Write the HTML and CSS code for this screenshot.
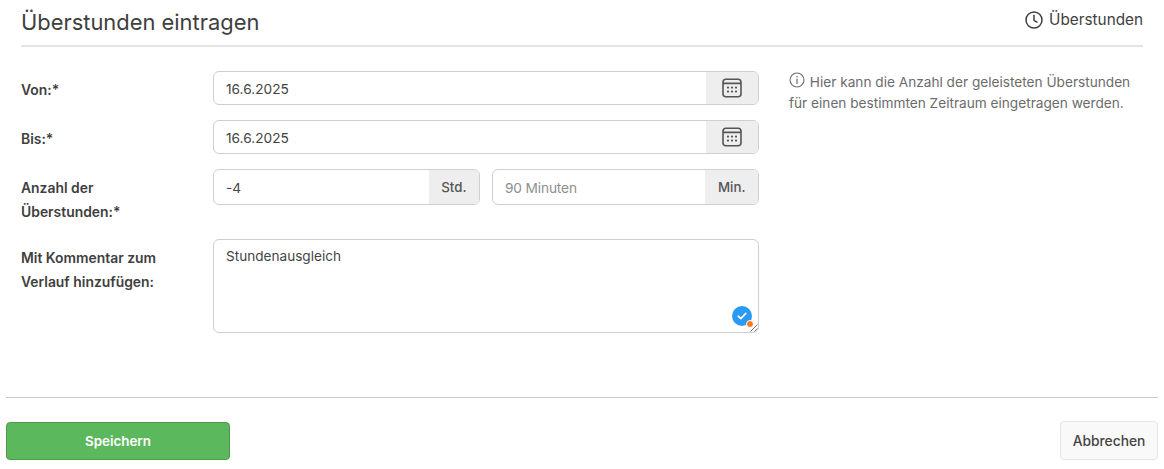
FILE: index.html
```html
<!DOCTYPE html>
<html lang="de">
<head>
<meta charset="utf-8">
<title>Überstunden eintragen</title>
<link rel="stylesheet" href="styles.css">
</head>
<body>
<main class="content">
  <header class="head">
    <h1 class="title">Überstunden eintragen</h1>
    <a class="head-link">
      <svg class="clock" viewBox="0 0 18 18" width="18" height="18" aria-hidden="true"><circle cx="9" cy="9" r="8" fill="none" stroke="currentColor" stroke-width="1.5"/><path d="M9 4.3V9.4L12 11.2" fill="none" stroke="currentColor" stroke-width="1.5" stroke-linecap="round" stroke-linejoin="round"/></svg>
      <span>Überstunden</span>
    </a>
  </header>
  <div class="columns">
    <form class="form">
      <div class="row row-date">
        <label class="label">Von:*</label>
        <div class="group">
          <div class="field">16.6.2025</div>
          <div class="addon addon-cal">
            <svg class="cal" viewBox="0 0 20 20" width="20" height="20" aria-hidden="true"><rect x="1" y="1.2" width="18" height="17.6" rx="3" fill="none" stroke="currentColor" stroke-width="1.6"/><path d="M1 5.4H19" stroke="currentColor" stroke-width="1.6"/><g fill="currentColor"><circle cx="6" cy="9.6" r="1.1"/><circle cx="10" cy="9.6" r="1.1"/><circle cx="14" cy="9.6" r="1.1"/><circle cx="6" cy="13.6" r="1.1"/><circle cx="10" cy="13.6" r="1.1"/><circle cx="14" cy="13.6" r="1.1"/></g></svg>
          </div>
        </div>
      </div>
      <div class="row row-date">
        <label class="label">Bis:*</label>
        <div class="group">
          <div class="field">16.6.2025</div>
          <div class="addon addon-cal">
            <svg class="cal" viewBox="0 0 20 20" width="20" height="20" aria-hidden="true"><rect x="1" y="1.2" width="18" height="17.6" rx="3" fill="none" stroke="currentColor" stroke-width="1.6"/><path d="M1 5.4H19" stroke="currentColor" stroke-width="1.6"/><g fill="currentColor"><circle cx="6" cy="9.6" r="1.1"/><circle cx="10" cy="9.6" r="1.1"/><circle cx="14" cy="9.6" r="1.1"/><circle cx="6" cy="13.6" r="1.1"/><circle cx="10" cy="13.6" r="1.1"/><circle cx="14" cy="13.6" r="1.1"/></g></svg>
          </div>
        </div>
      </div>
      <div class="row row-hours">
        <label class="label label-multi">Anzahl der Überstunden:*</label>
        <div class="pair">
          <div class="group group-tall">
            <div class="field">-4</div>
            <div class="addon">Std.</div>
          </div>
          <div class="group group-tall">
            <div class="field field-placeholder">90 Minuten</div>
            <div class="addon">Min.</div>
          </div>
        </div>
      </div>
      <div class="row">
        <label class="label label-multi label-comment">Mit Kommentar zum Verlauf hinzufügen:</label>
        <div class="textarea">
          Stundenausgleich
          <span class="badge">
            <svg viewBox="0 0 10 8" width="10" height="8" aria-hidden="true"><path d="M1.2 4.2L3.8 6.6L8.8 1.4" fill="none" stroke="#fff" stroke-width="1.6" stroke-linecap="round" stroke-linejoin="round"/></svg>
            <i class="dot"></i>
          </span>
          <svg class="grip" viewBox="0 0 8 8" width="8" height="8" aria-hidden="true"><path d="M0.5 7.5L7.5 0.5M4.5 7.5L7.5 4.5" stroke="#777" stroke-width="1" fill="none"/></svg>
        </div>
      </div>
    </form>
    <aside class="help">
      <svg class="info" viewBox="0 0 16 16" width="16" height="16" aria-hidden="true"><circle cx="8" cy="8" r="7" fill="none" stroke="currentColor" stroke-width="1.1"/><path d="M8 7.2V11.4" stroke="currentColor" stroke-width="1.2" stroke-linecap="round"/><circle cx="8" cy="4.8" r="0.8" fill="currentColor"/></svg>
      Hier kann die Anzahl der geleisteten Überstunden für einen bestimmten Zeitraum eingetragen werden.
    </aside>
  </div>
</main>
<footer class="foot">
  <button class="btn btn-save" type="button">Speichern</button>
  <button class="btn btn-cancel" type="button">Abbrechen</button>
</footer>
</body>
</html>
```

FILE: styles.css
```css
* { box-sizing: border-box; }
html, body { margin: 0; padding: 0; background: #fff; }
body {
  width: 1164px;
  height: 469px;
  overflow: hidden;
  font-family: Inter, "Liberation Sans", sans-serif;
  font-size: 13px;
  color: #4a4a4a;
}
.content { padding: 0 21px; height: 397px; }
.head {
  display: flex;
  align-items: center;
  justify-content: space-between;
  height: 47px;
  padding-bottom: 3px;
  border-bottom: 2px solid #e3e3e3;
}
.title { margin: 0; font-size: 21.9px; font-weight: 400; color: #404040; line-height: 42px; padding-top: 1px; }
.head-link { display: flex; align-items: center; gap: 6px; font-size: 15.3px; color: #404040; margin-top: -3px; }
.clock { display: block; }
.columns { display: flex; padding-top: 24px; }
.form { width: 738px; flex: none; display: flex; flex-direction: column; }
.row { display: flex; align-items: flex-start; }
.row-date { margin-bottom: 15px; align-items: center; }
.row-hours { margin-bottom: 13px; height: 57px; }
.label { width: 192px; flex: none; font-weight: 600; font-size: 13.9px; color: #404040; }
.row-date .label { padding-top: 4px; }
.label-multi { line-height: 24px; padding-right: 20px; }
.row-hours .label-multi { padding-top: 7px; padding-right: 40px; }
.label-comment { padding-top: 7px; }
.group {
  flex: 1;
  display: flex;
  height: 34px;
  border: 1px solid #cfcfcf;
  border-radius: 6px;
  overflow: hidden;
  background: #fff;
}
.group-tall { height: 36px; }
.field { flex: 1; padding: 2px 12px 0; display: flex; align-items: center; font-size: 13.7px; color: #444; }
.field-placeholder { color: #8f8f8f; letter-spacing: -0.01em; }
.addon {
  flex: none;
  display: flex;
  align-items: center;
  justify-content: center;
  padding: 0 12.5px 1px;
  background: #eeeeee;
  color: #555;
  font-size: 13.3px;
  font-weight: 500;
}
.addon-cal { width: 52px; padding: 0; color: #555; }
.cal { display: block; }
.pair { flex: 1; display: flex; gap: 12px; }
.textarea {
  position: relative;
  flex: 1;
  height: 94px;
  padding: 8px 12px;
  border: 1px solid #cfcfcf;
  border-radius: 6px;
  font-size: 13.6px;
  line-height: 16px;
  color: #444;
}
.badge {
  position: absolute;
  right: 6px;
  bottom: 6px;
  width: 20px;
  height: 20px;
  border-radius: 50%;
  background: #2b9af3;
  display: flex;
  align-items: center;
  justify-content: center;
}
.dot {
  position: absolute;
  right: -2px;
  bottom: -2px;
  border-radius: 50%;
  background: #f47b20;
  border: 1.5px solid #fff;
  box-sizing: content-box;
  width: 6px;
  height: 6px;
}
.grip { position: absolute; right: 0; bottom: 0; }
.help {
  margin-left: 30px;
  width: 350px;
  font-size: 13.65px;
  line-height: 21px;
  color: #6b6b6b;
  padding-top: 1px;
}
.info { vertical-align: -1px; margin-right: 1px; }
.foot {
  margin: 0 6px;
  border-top: 1px solid #cccccc;
  height: 72px;
  display: flex;
  justify-content: space-between;
  align-items: flex-start;
  padding-top: 23px;
}
.btn {
  font-family: inherit;
  font-size: 13.4px;
  font-weight: 600;
  border-radius: 4px;
  padding: 0;
  height: 39px;
}
.btn-save {
  width: 224px;
  height: 38px;
  margin-top: 1px;
  color: #fff;
  background: #5cb85c;
  border: 1px solid #4a9c4a;
}
.btn-cancel {
  width: 98px;
  color: #444;
  font-size: 13.8px;
  font-weight: 500;
  background: #f9f9f9;
  border: 1px solid #e6e6e6;
}
```
